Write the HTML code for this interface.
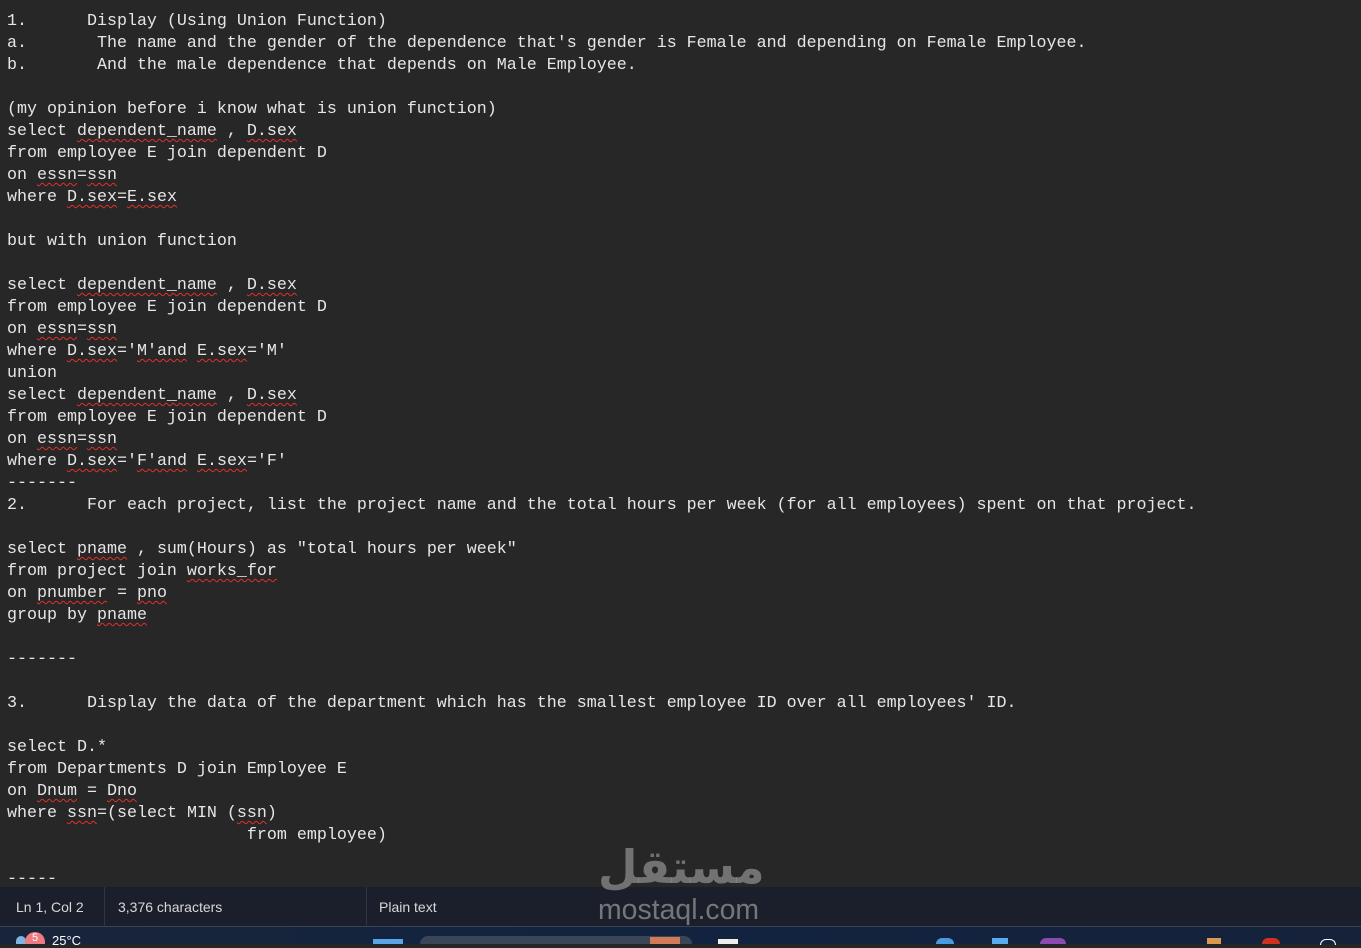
<!DOCTYPE html>
<html><head><meta charset="utf-8"><style>
html,body{margin:0;padding:0;width:1361px;height:944px;overflow:hidden;background:#272727;}
pre{margin:0;position:absolute;left:7px;top:11px;font-family:"Liberation Mono",monospace;font-size:16.67px;line-height:22px;color:#e6e6e6;white-space:pre;}
.u{text-decoration:underline wavy #e0302a;text-decoration-thickness:1px;text-underline-offset:3px;}
#status{position:absolute;left:0;top:887px;width:1361px;height:39px;background:#1b1f2b;border-bottom:1px solid #3a4350;font-family:"Liberation Sans",sans-serif;font-size:14px;color:#d8d8d8;}
#status span{position:absolute;top:12px;}
.sep{position:absolute;top:0;width:1px;height:39px;background:#2f3542;}
#task{position:absolute;left:0;top:927px;width:1361px;height:17px;background:linear-gradient(90deg,#18243a,#122340 50%,#15223a);}
#wm1{position:absolute;left:598px;top:840px;font-family:"DejaVu Sans","Noto Sans CJK SC",sans-serif;font-weight:bold;font-size:46px;color:rgba(140,140,140,0.75);transform:scaleX(0.99);transform-origin:left;}
#wm2{position:absolute;left:598px;top:894px;font-family:"Liberation Sans",sans-serif;font-size:29px;color:rgba(140,140,140,0.8);transform:scaleX(0.98);transform-origin:left;}
</style></head><body>
<pre>1.      Display (Using Union Function)
a.       The name and the gender of the dependence that's gender is Female and depending on Female Employee.
b.       And the male dependence that depends on Male Employee.

(my opinion before i know what is union function)
select <span class="u">dependent_name</span> , <span class="u">D.sex</span>
from employee E join dependent D
on <span class="u">essn</span>=<span class="u">ssn</span>
where <span class="u">D.sex</span>=<span class="u">E.sex</span>

but with union function

select <span class="u">dependent_name</span> , <span class="u">D.sex</span>
from employee E join dependent D
on <span class="u">essn</span>=<span class="u">ssn</span>
where <span class="u">D.sex</span>='<span class="u">M'and</span> <span class="u">E.sex</span>='M'
union
select <span class="u">dependent_name</span> , <span class="u">D.sex</span>
from employee E join dependent D
on <span class="u">essn</span>=<span class="u">ssn</span>
where <span class="u">D.sex</span>='<span class="u">F'and</span> <span class="u">E.sex</span>='F'
-------
2.      For each project, list the project name and the total hours per week (for all employees) spent on that project.

select <span class="u">pname</span> , sum(Hours) as "total hours per week"
from project join <span class="u">works_for</span>
on <span class="u">pnumber</span> = <span class="u">pno</span>
group by <span class="u">pname</span>

-------

3.      Display the data of the department which has the smallest employee ID over all employees' ID.

select D.*
from Departments D join Employee E
on <span class="u">Dnum</span> = <span class="u">Dno</span>
where <span class="u">ssn</span>=(select MIN (<span class="u">ssn</span>)
                        from employee)

-----</pre>
<div id="status">
<span style="left:16px">Ln 1, Col 2</span>
<div class="sep" style="left:104px"></div>
<span style="left:118px">3,376 characters</span>
<div class="sep" style="left:366px"></div>
<span style="left:379px">Plain text</span>
</div>
<div id="task">
<div style="position:absolute;left:16px;top:9px;width:10px;height:8px;border-radius:5px 5px 0 0;background:#7fb4e0"></div>
<div style="position:absolute;left:25px;top:5px;width:20px;height:12px;border-radius:10px 10px 0 0;background:#f07a84;color:#fff;font:11px 'Liberation Sans';text-align:center">5</div>
<div style="position:absolute;left:52px;top:6px;color:#fff;font:13px 'Liberation Sans'">25°C</div>
<div style="position:absolute;left:373px;top:12px;width:30px;height:5px;background:#59a5ea"></div>
<div style="position:absolute;left:420px;top:9px;width:272px;height:8px;border-radius:8px 8px 0 0;background:#3a4558"></div>
<div style="position:absolute;left:650px;top:10px;width:30px;height:7px;background:#d07a5a"></div>
<div style="position:absolute;left:718px;top:12px;width:20px;height:5px;background:#eee"></div>
<div style="position:absolute;left:936px;top:11px;width:18px;height:6px;border-radius:8px 8px 0 0;background:#4a9ae0"></div>
<div style="position:absolute;left:992px;top:11px;width:16px;height:6px;background:#5aaaf0"></div>
<div style="position:absolute;left:1040px;top:11px;width:26px;height:6px;border-radius:8px 8px 0 0;background:#8a4ab0"></div>
<div style="position:absolute;left:1207px;top:11px;width:14px;height:6px;background:#d99a50"></div>
<div style="position:absolute;left:1262px;top:11px;width:18px;height:6px;border-radius:8px 8px 0 0;background:#d03020"></div>
<div style="position:absolute;left:1320px;top:12px;width:14px;height:5px;border-radius:6px 6px 0 0;border:1px solid #fff;border-bottom:0"></div>
</div>
<div id="wm1">مستقل</div>
<div id="wm2">mostaql.com</div>
</body></html>
